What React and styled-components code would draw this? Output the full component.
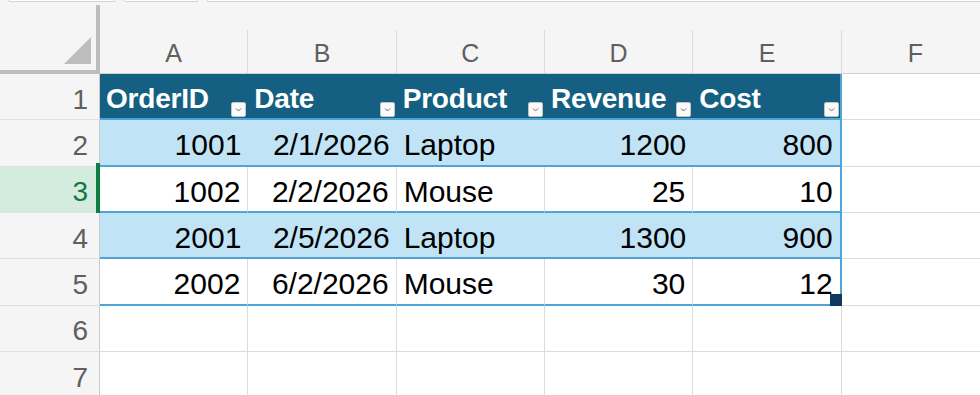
import React from 'react'
import styled, { createGlobalStyle } from 'styled-components'

const GlobalStyle = createGlobalStyle`
    html, body {
        margin: 0;
        padding: 0;
        background: #ffffff;
    }
    * {
        box-sizing: border-box;
    }
`

const Page = styled.div`
    width: 980px;
    height: 395px;
    overflow: hidden;
    background: #ffffff;
    font-family: "Liberation Sans", Arial, sans-serif;
`

const TabStrip = styled.div`
    height: 5px;
    background: #f5f5f5;
    display: flex;
    gap: 9px;
    padding-left: 8px;
    align-items: flex-start;
`

const Tab = styled.div`
    width: ${props => props.$width}px;
    flex-shrink: 0;
    height: 2px;
    background: #ffffff;
    border: 1px solid #d2d2d2;
    border-top: none;
    border-radius: 0 0 3px 3px;
`

const Sheet = styled.div`
    display: grid;
    grid-template-columns: 100px repeat(6, 148.33px);
    grid-template-rows: 69px repeat(7, 46.33px);
`

const Corner = styled.div`
    background: #f5f5f5;
    border-right: 4px solid #bdbdbd;
    border-bottom: 4px solid #bdbdbd;
    display: flex;
    align-items: flex-end;
    justify-content: flex-end;
    padding: 0 5px 6px 0;
`

const CornerTriangle = styled.div`
    width: 27px;
    height: 27px;
    background: #bdbdbd;
    clip-path: polygon(100% 0, 100% 100%, 0 100%);
`

const ColHead = styled.div`
    background: #f5f5f5;
    border-bottom: 1px solid #d0d0d0;
    display: flex;
    flex-direction: column;
    justify-content: flex-end;
`

const ColLabel = styled.div`
    height: 43px;
    border-right: 1px solid #dadada;
    display: flex;
    align-items: center;
    justify-content: center;
    padding-top: 4px;
    font-size: 25px;
    color: #5f5f5f;
`

const RowHead = styled.div`
    position: relative;
    background: ${props => props.$active ? '#d3ecdd' : '#f5f5f5'};
    color: ${props => props.$active ? '#137745' : '#5f5f5f'};
    border-right: 1px solid #cacaca;
    border-bottom: 1px solid #e0e0e0;
    display: flex;
    align-items: center;
    justify-content: flex-end;
    padding: 6px 11px 0 0;
    font-size: 28px;

    &::after {
        content: '';
        display: ${props => props.$active ? 'block' : 'none'};
        position: absolute;
        right: -1px;
        top: -4px;
        bottom: -3px;
        width: 4px;
        background: #107c41;
    }
`

const HeaderCell = styled.div`
    background: #156082;
    color: #ffffff;
    font-weight: 700;
    font-size: 28px;
    border-bottom: 2px solid #4ea6d8;
    border-right: ${props => props.$last ? '2px solid #4ea6d8' : 'none'};
    display: flex;
    align-items: center;
    justify-content: space-between;
    padding: 6px ${props => props.$last ? '1px' : '2px'} 0 6px;
    white-space: nowrap;
    letter-spacing: -0.2px;
`

const FilterButton = styled.div`
    align-self: flex-end;
    margin-bottom: 1px;
    width: 15px;
    height: 15px;
    flex-shrink: 0;
    background: #fafafa;
    border: 1px solid #c4c4c4;
    border-radius: 2px;
    display: flex;
    align-items: center;
    justify-content: center;
`

const Cell = styled.div`
    position: relative;
    background: ${props => props.$band ? '#c0e4f5' : '#ffffff'};
    border-bottom: ${props => props.$table ? '2px solid #4ea6d8' : '1px solid #dcdcdc'};
    border-right: ${props => props.$last
        ? '2px solid #4ea6d8'
        : props.$band ? 'none' : '1px solid #dcdcdc'};
    display: flex;
    align-items: center;
    justify-content: ${props => props.$num ? 'flex-end' : 'flex-start'};
    padding: 6px 7px 0 7px;
    font-size: 30px;
    color: #000000;
    white-space: nowrap;
`

const FillHandle = styled.div`
    position: absolute;
    right: -2px;
    bottom: -2px;
    width: 12px;
    height: 12px;
    background: #0f3a5f;
`

const columns = ['A', 'B', 'C', 'D', 'E', 'F']
const headers = ['OrderID', 'Date', 'Product', 'Revenue', 'Cost']
const rows = [
    ['1001', '2/1/2026', 'Laptop', '1200', '800'],
    ['1002', '2/2/2026', 'Mouse', '25', '10'],
    ['2001', '2/5/2026', 'Laptop', '1300', '900'],
    ['2002', '6/2/2026', 'Mouse', '30', '12'],
]

const Chevron = () => (
    <svg width="9" height="9" viewBox="0 0 9 9">
        <polyline points="2,3.5 4.5,6 7,3.5" fill="none" stroke="#6b6b6b" strokeWidth="1" />
    </svg>
)

const App = () => (
    <Page>
        <GlobalStyle />
        <TabStrip>
            <Tab $width={107} />
            <Tab $width={74} />
            <Tab $width={780} />
        </TabStrip>
        <Sheet>
            <Corner>
                <CornerTriangle />
            </Corner>
            {columns.map(col => (
                <ColHead key={col}>
                    <ColLabel>{col}</ColLabel>
                </ColHead>
            ))}

            <RowHead>1</RowHead>
            {headers.map((h, i) => (
                <HeaderCell key={h} $last={i === headers.length - 1}>
                    {h}
                    <FilterButton><Chevron /></FilterButton>
                </HeaderCell>
            ))}
            <Cell />

            {rows.map((row, r) => (
                <React.Fragment key={r}>
                    <RowHead $active={r === 1}>{r + 2}</RowHead>
                    {row.map((value, c) => (
                        <Cell
                            key={c}
                            $table
                            $band={r % 2 === 0}
                            $num={c !== 2}
                            $last={c === row.length - 1}
                        >
                            {value}
                            {r === rows.length - 1 && c === row.length - 1 && <FillHandle />}
                        </Cell>
                    ))}
                    <Cell />
                </React.Fragment>
            ))}

            {[6, 7].map(n => (
                <React.Fragment key={n}>
                    <RowHead>{n}</RowHead>
                    {columns.map(col => <Cell key={col} />)}
                </React.Fragment>
            ))}
        </Sheet>
    </Page>
)

export default App
